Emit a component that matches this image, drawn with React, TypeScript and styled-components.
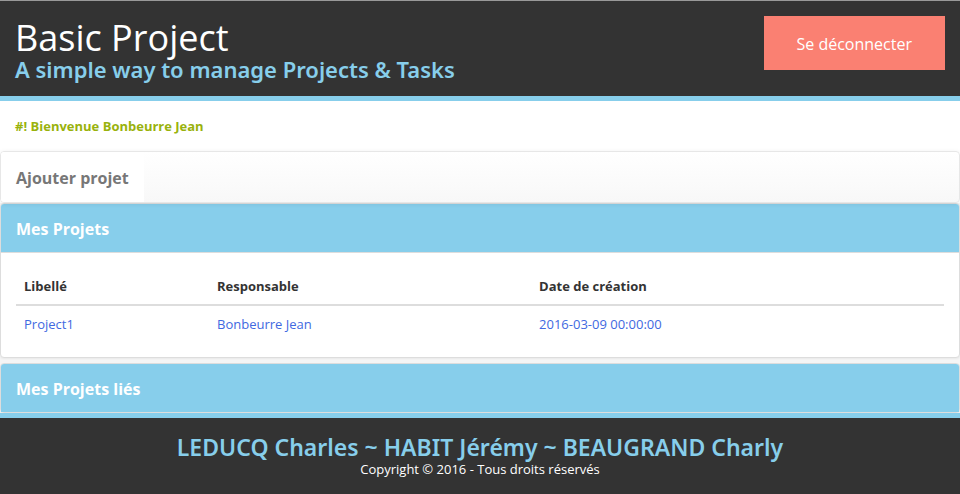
import React from "react";
import styled, { createGlobalStyle } from "styled-components";

const SKY = "#87ceeb";
const DARK = "#333333";
const LINE = "#dddddd";

const GlobalStyle = createGlobalStyle`
  *, *::before, *::after { box-sizing: border-box; }
  body {
    margin: 0;
    background: #ffffff;
    color: ${DARK};
    font: 13px/20px "Open Sans", "Noto Sans", sans-serif;
  }
  h1, h2, h3, p { margin: 0; }
`;

const Page = styled.div`
  display: flex;
  flex-direction: column;
  min-height: 100vh;
`;

const Header = styled.header`
  display: flex;
  justify-content: space-between;
  align-items: flex-start;
  padding: 15px 15px 16px;
  background: ${DARK};
  border-top: 1px solid #999999;
  border-bottom: 5px solid ${SKY};
`;

const SiteTitle = styled.h1`
  color: #ffffff;
  font-size: 36px;
  font-weight: 400;
  line-height: 43px;
`;

const Tagline = styled.h2`
  color: ${SKY};
  font-family: "Noto Sans", sans-serif;
  font-size: 22px;
  font-weight: 600;
  line-height: 21px;
`;

const LogoutButton = styled.button`
  padding: 16px 33px 14px;
  border: 0;
  background: salmon;
  color: #ffffff;
  font-family: inherit;
  font-size: 16px;
  line-height: 24px;
  cursor: pointer;
`;

const Welcome = styled.p`
  padding: 15px;
  color: #99b20c;
  font-weight: 700;
`;

const Navbar = styled.nav`
  position: relative;
  display: flex;
  border: 1px solid #e7e7e7;
  border-radius: 4px;
  background: linear-gradient(to bottom, #ffffff, #f8f8f8);
  box-shadow: 0 1px 5px rgba(0, 0, 0, 0.075);
`;

const NavLink = styled.a`
  padding: 16px 15px 14px;
  background: #ffffff;
  border-radius: 3px 0 0 3px;
  color: #777777;
  font-size: 16px;
  font-weight: 700;
  text-decoration: none;
`;

const PanelList = styled.main`
  display: grid;
  gap: 5px;
  background: #f5f5f5;
`;

const Panel = styled.section`
  border: 1px solid ${LINE};
  border-radius: 4px;
  background: #ffffff;
  box-shadow: 0 1px 2px rgba(0, 0, 0, 0.05);
`;

const PanelTitle = styled.h3`
  padding: 15px 15px 13px;
  border-radius: 3px 3px 0 0;
  background: ${SKY};
  color: #ffffff;
  font-size: 16px;
  font-weight: 700;
  line-height: 20px;
`;

const PanelBody = styled.div`
  padding: 15px;
  border-top: 1px solid ${LINE};
`;

const Table = styled.table`
  width: 100%;
  border-collapse: collapse;
  table-layout: fixed;
`;

const HeadCell = styled.th<{ $width?: string }>`
  width: ${(p) => p.$width ?? "auto"};
  padding: 8px;
  border-bottom: 2px solid ${LINE};
  text-align: left;
  font-weight: 700;
`;

const Cell = styled.td`
  padding: 8px;
`;

const CellLink = styled.a`
  color: royalblue;
  text-decoration: none;
`;

const Footer = styled.footer`
  flex: 1;
  padding: 18px 15px 13px;
  border-top: 5px solid ${SKY};
  background: ${DARK};
  color: #ffffff;
  text-align: center;
`;

const Authors = styled.p`
  color: ${SKY};
  font-family: "Noto Sans", sans-serif;
  font-size: 23px;
  font-weight: 600;
  line-height: 23px;
`;

const projects = [
  { label: "Project1", owner: "Bonbeurre Jean", created: "2016-03-09 00:00:00" },
];

export default function App() {
  return (
    <Page>
      <GlobalStyle />
      <Header>
        <div>
          <SiteTitle>Basic Project</SiteTitle>
          <Tagline>A simple way to manage Projects &amp; Tasks</Tagline>
        </div>
        <LogoutButton type="button">Se déconnecter</LogoutButton>
      </Header>
      <Welcome>#! Bienvenue Bonbeurre Jean</Welcome>
      <Navbar>
        <NavLink href="#ajouter">Ajouter projet</NavLink>
      </Navbar>
      <PanelList>
        <Panel>
          <PanelTitle>Mes Projets</PanelTitle>
          <PanelBody>
            <Table>
              <thead>
                <tr>
                  <HeadCell scope="col" $width="20.8%">Libellé</HeadCell>
                  <HeadCell scope="col" $width="34.7%">Responsable</HeadCell>
                  <HeadCell scope="col">Date de création</HeadCell>
                </tr>
              </thead>
              <tbody>
                {projects.map((project) => (
                  <tr key={project.label}>
                    <Cell><CellLink href="#projet">{project.label}</CellLink></Cell>
                    <Cell><CellLink href="#projet">{project.owner}</CellLink></Cell>
                    <Cell><CellLink href="#projet">{project.created}</CellLink></Cell>
                  </tr>
                ))}
              </tbody>
            </Table>
          </PanelBody>
        </Panel>
        <Panel>
          <PanelTitle>Mes Projets liés</PanelTitle>
        </Panel>
      </PanelList>
      <Footer>
        <Authors>LEDUCQ Charles ~ HABIT Jérémy ~ BEAUGRAND Charly</Authors>
        <p>Copyright © 2016 - Tous droits réservés</p>
      </Footer>
    </Page>
  );
}
